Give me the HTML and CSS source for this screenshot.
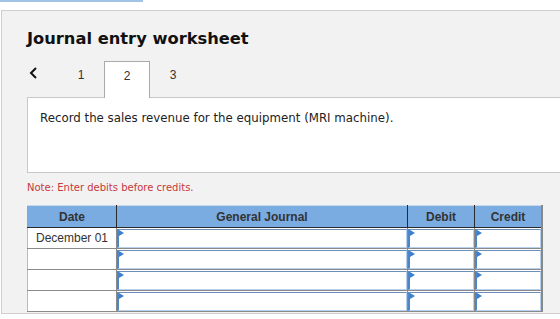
FILE: index.html
```html
<!DOCTYPE html>
<html lang="en">
<head>
    <meta charset="UTF-8">
    <title>Journal entry worksheet</title>
    <link rel="stylesheet" href="styles.css">
</head>
<body>
    <div class="top-bar"></div>
    <div class="worksheet">
        <h1 class="title">Journal entry worksheet</h1>
        <div class="tabs">
            <span class="prev">
                <svg width="9" height="12" viewBox="0 0 9 12"><polyline points="7,1 2,6 7,11" fill="none" stroke="#111" stroke-width="2"/></svg>
            </span>
            <span class="tab">1</span>
            <span class="tab active">2</span>
            <span class="tab">3</span>
        </div>
        <div class="question">
            <p>Record the sales revenue for the equipment (MRI machine).</p>
        </div>
        <p class="note">Note: Enter debits before credits.</p>
        <table class="journal">
            <thead>
                <tr>
                    <th class="col-date">Date</th>
                    <th class="col-account">General Journal</th>
                    <th class="col-debit">Debit</th>
                    <th class="col-credit">Credit</th>
                </tr>
            </thead>
            <tbody>
                <tr>
                    <td class="date">December 01</td>
                    <td><div class="field"></div></td>
                    <td><div class="field"></div></td>
                    <td><div class="field"></div></td>
                </tr>
                <tr>
                    <td class="date"></td>
                    <td><div class="field"></div></td>
                    <td><div class="field"></div></td>
                    <td><div class="field"></div></td>
                </tr>
                <tr>
                    <td class="date"></td>
                    <td><div class="field"></div></td>
                    <td><div class="field"></div></td>
                    <td><div class="field"></div></td>
                </tr>
                <tr>
                    <td class="date"></td>
                    <td><div class="field"></div></td>
                    <td><div class="field"></div></td>
                    <td><div class="field"></div></td>
                </tr>
            </tbody>
        </table>
    </div>
</body>
</html>
```

FILE: styles.css
```css
body {
    margin: 0;
    background-color: #fff;
    font-family: 'DejaVu Sans', Verdana, sans-serif;
    color: #222;
    overflow: hidden;
}

.top-bar {
    width: 143px;
    height: 2px;
    background-color: #a3c2e6;
}

.worksheet {
    margin: 8px 0 0 1px;
    height: 302px;
    padding-left: 25px;
    background-color: #f2f2f2;
    border: 1px solid #cfcfcf;
    border-right: none;
    overflow: hidden;
}

.title {
    margin: 0;
    padding-top: 17px;
    font-size: 16.3px;
    font-weight: bold;
    color: #111;
    line-height: 22px;
}

.tabs {
    display: flex;
    align-items: flex-end;
    height: 36px;
    margin-top: 11px;
    font-family: 'Liberation Sans', Arial, sans-serif;
    font-size: 12px;
    color: #333;
}

.prev {
    width: 31px;
    padding-left: 2px;
    box-sizing: border-box;
    align-self: flex-start;
    padding-top: 6px;
}

.prev svg {
    display: block;
}

.tab {
    width: 46px;
    height: 36px;
    line-height: 28px;
    text-align: center;
    box-sizing: border-box;
}

.tab.active {
    background-color: #fff;
    border: 1px solid #aaa;
    border-bottom: none;
    height: 37px;
    margin-bottom: -1px;
    position: relative;
    z-index: 1;
}

.question {
    height: 74px;
    background-color: #fff;
    border: 1px solid #c8c8c8;
    border-right: none;
}

.question p {
    margin: 13px 0 0 12px;
    font-size: 11.8px;
    color: #222;
}

.note {
    margin: 9px 0 0;
    font-size: 10px;
    color: #c8393b;
}

.journal {
    margin-top: 12px;
    width: 510px;
    border-collapse: collapse;
    font-family: 'Liberation Sans', Arial, sans-serif;
    font-size: 12px;
    color: #333;
    table-layout: fixed;
    border-right: 2px solid #888;
}

.journal th {
    height: 21px;
    background-color: #7aace2;
    border: 1px solid #2a2a2a;
    border-top: 1px solid #c6d8ec;
    border-left-color: #7aace2;
    font-weight: bold;
    padding: 0;
}

.journal th + th {
    border-left-color: #2a2a2a;
}

.col-date { width: 88px; }
.col-account { width: 290px; }
.col-debit { width: 66px; }
.col-credit { width: 66px; }

.journal td {
    height: 20px;
    padding: 0;
    border: 1px solid #8a8a8a;
    background-color: #fff;
}

.journal td.date {
    text-align: center;
    border-left-color: #bbb;
}

.field {
    position: relative;
    height: 17px;
    border: 1px solid #b6d0ee;
    border-left: 2px solid #4d86c6;
    border-top-color: #6b8fb8;
}

.field::before {
    content: "";
    position: absolute;
    left: 0;
    top: 0;
    border-top: 3px solid transparent;
    border-bottom: 3px solid transparent;
    border-left: 5px solid #3b7fd0;
}
```
